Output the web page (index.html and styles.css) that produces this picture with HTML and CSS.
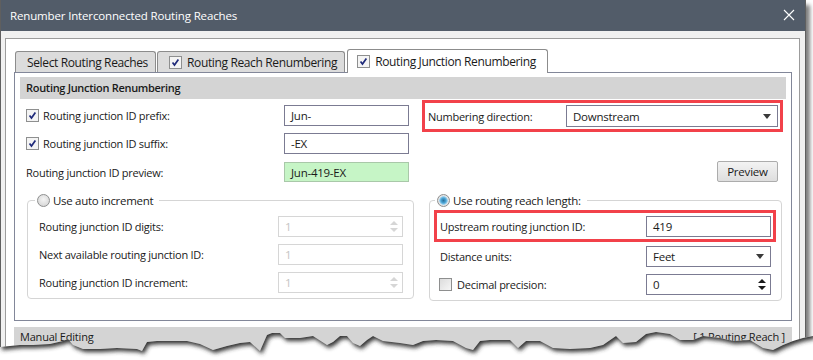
FILE: index.html
```html
<!DOCTYPE html>
<html>
<head>
<meta charset="utf-8">
<title>Renumber Interconnected Routing Reaches</title>
<link rel="stylesheet" href="styles.css">
</head>
<body>
<div class="window">
  <div class="titlebar">
    <span class="title">Renumber Interconnected Routing Reaches</span>
    <svg class="close" width="12" height="12" viewBox="0 0 12 12"><path d="M1 1L11 11M11 1L1 11" stroke="#ffffff" stroke-width="1.1"/></svg>
  </div>
  <div class="client">
    <div class="panel">
      <div class="tabs">
        <div class="tab t1">Select Routing Reaches</div>
        <div class="tab t2"><span class="cb on"><svg viewBox="0 0 13 13"><path d="M3 6.4L5.3 9.4L9.9 2.9" fill="none" stroke="#1f2a7a" stroke-width="2"/></svg></span>Routing Reach Renumbering</div>
        <div class="tab t3 active"><span class="cb on"><svg viewBox="0 0 13 13"><path d="M3 6.4L5.3 9.4L9.9 2.9" fill="none" stroke="#1f2a7a" stroke-width="2"/></svg></span>Routing Junction Renumbering</div>
      </div>
      <div class="tabpage">
        <div class="header">Routing Junction Renumbering</div>
        <div class="cols">
          <div class="col-left">
            <div class="row r1">
              <span class="lbl"><span class="cb on"><svg viewBox="0 0 13 13"><path d="M3 6.4L5.3 9.4L9.9 2.9" fill="none" stroke="#1f2a7a" stroke-width="2"/></svg></span>Routing junction ID prefix:</span>
              <div class="tb">Jun-</div>
            </div>
            <div class="row r2">
              <span class="lbl"><span class="cb on"><svg viewBox="0 0 13 13"><path d="M3 6.4L5.3 9.4L9.9 2.9" fill="none" stroke="#1f2a7a" stroke-width="2"/></svg></span>Routing junction ID suffix:</span>
              <div class="tb">-EX</div>
            </div>
            <div class="row r3">
              <span class="lbl">Routing junction ID preview:</span>
              <div class="tb preview">Jun-419-EX</div>
            </div>
            <fieldset class="group g1">
              <legend><span class="rb"></span>Use auto increment</legend>
              <div class="grow first">
                <span class="lbl">Routing junction ID digits:</span>
                <div class="tb dis"><span>1</span><span class="spin"><i class="up"></i><i class="dn"></i></span></div>
              </div>
              <div class="grow">
                <span class="lbl">Next available routing junction ID:</span>
                <div class="tb dis"><span>1</span></div>
              </div>
              <div class="grow">
                <span class="lbl">Routing junction ID increment:</span>
                <div class="tb dis"><span>1</span><span class="spin"><i class="up"></i><i class="dn"></i></span></div>
              </div>
            </fieldset>
          </div>
          <div class="col-right">
            <div class="redbox rb1">
              <span class="lbl">Numbering direction:</span>
              <div class="tb combo wide"><span>Downstream</span><i class="arrow"></i></div>
            </div>
            <div class="btnrow"><button class="btn">Preview</button></div>
            <fieldset class="group g2">
              <legend><span class="rb sel"></span>Use routing reach length:</legend>
              <div class="redbox rb2">
                <span class="lbl">Upstream routing junction ID:</span>
                <div class="tb">419</div>
              </div>
              <div class="grow g2row">
                <span class="lbl">Distance units:</span>
                <div class="tb combo"><span>Feet</span><i class="arrow"></i></div>
              </div>
              <div class="grow g2row">
                <span class="lbl"><span class="cb"></span>Decimal precision:</span>
                <div class="tb"><span>0</span><span class="spin dark"><i class="up"></i><i class="dn"></i></span></div>
              </div>
            </fieldset>
          </div>
        </div>
      </div>
      <div class="footerbar"><span>Manual Editing</span><span>[ 1 Routing Reach ]</span></div>
    </div>
  </div>
</div>
<svg class="tear" width="813" height="360" viewBox="0 0 813 360">
  <defs>
    <clipPath id="below">
      <polygon points="0,347 10,346 20,345 33,345 50,344 63,341 68,339 73,345 83,349 100,349 117,348 137,349 142,351 147,342 157,341 173,341 187,341 200,344 213,350 227,346 240,343 250,342 260,351 267,335 272,333 280,333 285,338 300,338 313,336 327,345 333,342 340,336 347,336 353,343 360,346 367,340 373,336 383,341 400,343 413,345 423,341 436,340 453,341 466,348 473,350 480,341 490,340 510,340 518,348 526,341 540,341 553,348 570,349 590,348 603,345 616,336 623,343 636,342 646,334 656,332 670,334 680,340 693,340 703,336 720,338 733,341 750,340 763,348 773,350 783,345 793,341 803,338 813,336 813,360 0,360"/>
    </clipPath>
    <filter id="blur" x="-5%" y="-50%" width="110%" height="200%"><feGaussianBlur stdDeviation="2.2"/></filter>
  </defs>
  <g clip-path="url(#below)">
    <rect x="0" y="320" width="813" height="40" fill="#ffffff"/>
    <polygon filter="url(#blur)" fill="#333333" transform="translate(2,3)" points="0,347 10,346 20,345 33,345 50,344 63,341 68,339 73,345 83,349 100,349 117,348 137,349 142,351 147,342 157,341 173,341 187,341 200,344 213,350 227,346 240,343 250,342 260,351 267,335 272,333 280,333 285,338 300,338 313,336 327,345 333,342 340,336 347,336 353,343 360,346 367,340 373,336 383,341 400,343 413,345 423,341 436,340 453,341 466,348 473,350 480,341 490,340 510,340 518,348 526,341 540,341 553,348 570,349 590,348 603,345 616,336 623,343 636,342 646,334 656,332 670,334 680,340 693,340 703,336 720,338 733,341 750,340 763,348 773,350 783,345 793,341 803,338 813,336 813,300 0,300"/>
  </g>
</svg>
</body>
</html>
```
FILE: styles.css
```css
html, body {
  margin: 0;
  padding: 0;
  background: #ffffff;
  overflow: hidden;
}
body {
  font-family: "Open Sans", "Noto Sans", "Liberation Sans", sans-serif;
  font-size: 11px;
  letter-spacing: -0.25px;
  color: #1a1a1a;
  width: 813px;
  height: 360px;
  position: relative;
}
.window {
  width: 804px;
  height: 380px;
  background: #f0f0f0;
  border-left: 1px solid #5f5f5f;
  border-right: 1px solid #5f5f5f;
  box-shadow: 4px 5px 4px rgba(0, 0, 0, 0.5);
}
.titlebar {
  height: 31px;
  background: #525c69;
  display: flex;
  align-items: center;
  justify-content: space-between;
  padding: 0 10px 0 9px;
}
.title {
  color: #ffffff;
  font-size: 11.5px;
  letter-spacing: -0.15px;
}
.close { display: block; margin-top: -2px; }
.client {
  padding: 7px 5px 0 4px;
}
.panel {
  background: #ffffff;
  border: 1px solid #9c9c9c;
  padding: 10px 7px 0 8px;
  height: 340px;
}
.tabs {
  display: flex;
  align-items: flex-end;
  height: 23px;
  padding-left: 1px;
}
.tab {
  box-sizing: border-box;
  height: 21px;
  border: 1px solid #8c8c8c;
  border-bottom: none;
  border-radius: 3px 3px 0 0;
  background: #dcdcdc;
  display: flex;
  align-items: center;
  font-size: 12px;
  letter-spacing: -0.36px;
  padding: 0 7px 0 11px;
  margin-right: 1px;
  white-space: nowrap;
}
.tab.active {
  height: 24px;
  background: #ffffff;
  margin-bottom: -1px;
  margin-left: 1px;
  padding: 0 11px 0 9px;
  position: relative;
  z-index: 1;
}
.tab .cb { margin-right: 5px; }
.tabpage {
  box-sizing: border-box;
  height: 249px;
  border: 1px solid #828799;
}
.header {
  margin: 4px 5px 0 5px;
  height: 22px;
  line-height: 22px;
  background: #d4d4d4;
  padding-left: 6px;
  font-weight: 600;
  letter-spacing: -0.3px;
}
.cols {
  display: flex;
  gap: 8px;
  padding: 0 6px 0 11px;
}
.col-left { width: 388px; }
.col-right { width: 361px; }
.row {
  display: flex;
  align-items: center;
  justify-content: space-between;
  height: 21px;
  padding-right: 5px;
}
.r1 { margin-top: 6px; }
.r2 { margin-top: 7px; }
.r3 { margin-top: 8px; height: 20px; }
.lbl {
  display: flex;
  align-items: center;
  white-space: nowrap;
}
.lbl .cb { margin-right: 4px; }
.tb {
  box-sizing: border-box;
  width: 125px;
  height: 21px;
  border: 1px solid #7b7b92;
  background: #ffffff;
  padding: 0 6px;
  display: flex;
  align-items: center;
  justify-content: space-between;
  position: relative;
  font-size: 11.5px;
}
.tb.preview {
  height: 20px;
  background: #c6f5c6;
  border-color: #a9c8a9;
}
.tb.dis {
  border-color: #d6d6d6;
  color: #c4c4c4;
}
.tb.wide { width: 212px; height: 22px; }
.cb {
  box-sizing: border-box;
  width: 13px;
  height: 13px;
  border: 1px solid #8e8f8f;
  background: linear-gradient(135deg, #dcdcdc, #f6f6f6);
  display: inline-block;
  flex: none;
}
.cb.on { background: #f4f4f4; }
.cb svg { display: block; width: 11px; height: 11px; }
.rb {
  box-sizing: border-box;
  width: 13px;
  height: 13px;
  border-radius: 50%;
  border: 1px solid #8e8f8f;
  background: radial-gradient(circle at 50% 40%, #f4f4f4 0, #d0d0d0 100%);
  display: inline-block;
  margin-right: 3px;
  flex: none;
}
.rb.sel {
  background: radial-gradient(circle at 50% 50%, #2c6f9a 0, #4ba6d6 2.5px, #9fd1ee 4px, #e8e8e8 4.6px, #d8d8d8 100%);
}
.group {
  margin: 0;
  border: 1px solid #d5d5d5;
  border-radius: 4px;
  min-width: 0;
}
.g1 {
  margin: 10px 0 0 1px;
  padding: 0 10px 5px 11px;
}
legend {
  display: flex;
  align-items: center;
  padding: 0 6px 0 2px;
  margin-left: -4px;
  height: 17px;
  font-size: 11.5px;
  letter-spacing: -0.3px;
}
.grow {
  display: flex;
  align-items: center;
  justify-content: space-between;
  height: 22px;
  margin-top: 6px;
}
.spin {
  display: flex;
  flex-direction: column;
  gap: 3px;
  margin-right: -2px;
}
.spin i {
  display: block;
  width: 0;
  height: 0;
  border-left: 4px solid transparent;
  border-right: 4px solid transparent;
}
.spin .up { border-bottom: 4px solid #d6d6d6; }
.spin .dn { border-top: 4px solid #d6d6d6; }
.spin.dark .up { border-bottom-color: #1a1a1a; }
.spin.dark .dn { border-top-color: #1a1a1a; }
.arrow {
  display: block;
  width: 0;
  height: 0;
  border-left: 4.5px solid transparent;
  border-right: 4.5px solid transparent;
  border-top: 5px solid #3a3a3a;
}
.redbox {
  box-sizing: border-box;
  border: 3px solid #f2414a;
  display: flex;
  align-items: center;
  justify-content: space-between;
}
.rb1 {
  margin-top: 1px;
  height: 32px;
  padding: 0 2px 0 3px;
}
.btnrow {
  display: flex;
  justify-content: flex-end;
  margin-top: 29px;
  padding-right: 5px;
}
.btn {
  box-sizing: border-box;
  width: 61px;
  height: 21px;
  border: 1px solid #acacac;
  border-radius: 2px;
  background: linear-gradient(#f3f3f3, #dedede);
  font-family: inherit;
  font-size: 11.5px;
  letter-spacing: -0.2px;
  color: #1a1a1a;
  padding: 0;
}
.g2 {
  margin: 10px 1px 0 7px;
  padding: 0 0 5px 0;
}
.g2 legend { margin-left: 5px; }
.rb2 {
  margin: 1px 5px 0 4px;
  height: 32px;
  padding: 0 2px 0 3px;
}
.g2row { margin: 3px 10px 0 10px; }
.g2row + .g2row { margin-top: 6px; }
.g2row .cb { margin-left: -1px; margin-right: 5px; }
.footerbar {
  margin-top: 6px;
  height: 24px;
  background: #d4d4d4;
  display: flex;
  justify-content: space-between;
  align-items: flex-start;
  padding: 2px 7px 0 6px;
  box-sizing: border-box;
  font-size: 11px;
  letter-spacing: -0.2px;
}
.tear {
  position: absolute;
  left: 0;
  top: 0;
  pointer-events: none;
}
```
